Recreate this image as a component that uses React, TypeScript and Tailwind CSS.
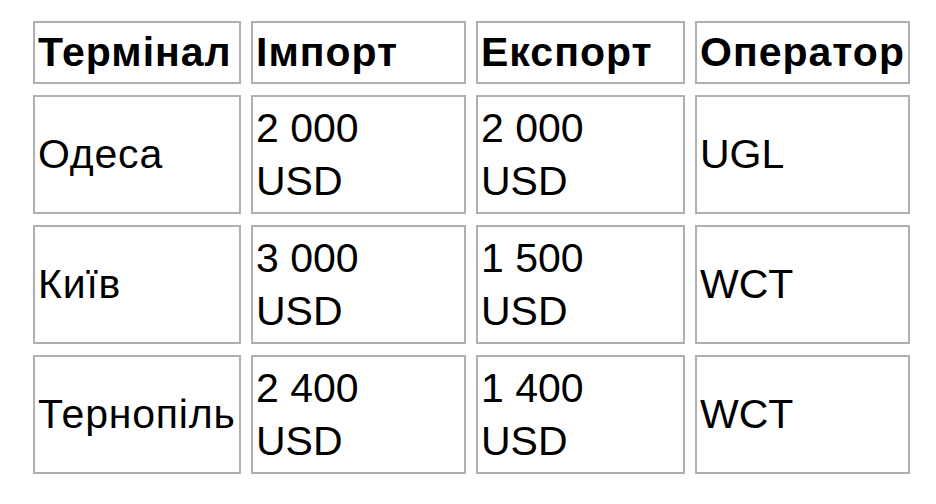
import { Fragment } from "react";

const rows = [
  ["Одеса", "2 000", "2 000", "UGL"],
  ["Київ", "3 000", "1 500", "WCT"],
  ["Тернопіль", "2 400", "1 400", "WCT"],
];

const headers = ["Термінал", "Імпорт", "Експорт", "Оператор"];

function Cell({ children, className = "" }: { children: React.ReactNode; className?: string }) {
  return (
    <div
      className={
        "flex items-center border-2 border-[#b0b0b0] pl-[3px] pr-[2px] text-[41px] leading-[53px] text-black " +
        className
      }
    >
      <div>{children}</div>
    </div>
  );
}

export default function App() {
  return (
    <div className="w-[936px] h-[504px] bg-white pt-[21px] pl-[33px] font-['Liberation_Sans',Arial,sans-serif]">
      <div className="grid grid-cols-[208px_215px_209px_215px] grid-rows-[63px_119px_119px_119px] gap-x-[10px] gap-y-[11px]">
        {headers.map((h) => (
          <Cell key={h} className="font-bold tracking-[1px]">
            {h}
          </Cell>
        ))}
        {rows.map((r) => (
          <Fragment key={r[0]}>
            <Cell className="tracking-[0.8px]">{r[0]}</Cell>
            <Cell>
              {r[1]}
              <br />
              USD
            </Cell>
            <Cell>
              {r[2]}
              <br />
              USD
            </Cell>
            <Cell>{r[3]}</Cell>
          </Fragment>
        ))}
      </div>
    </div>
  );
}
